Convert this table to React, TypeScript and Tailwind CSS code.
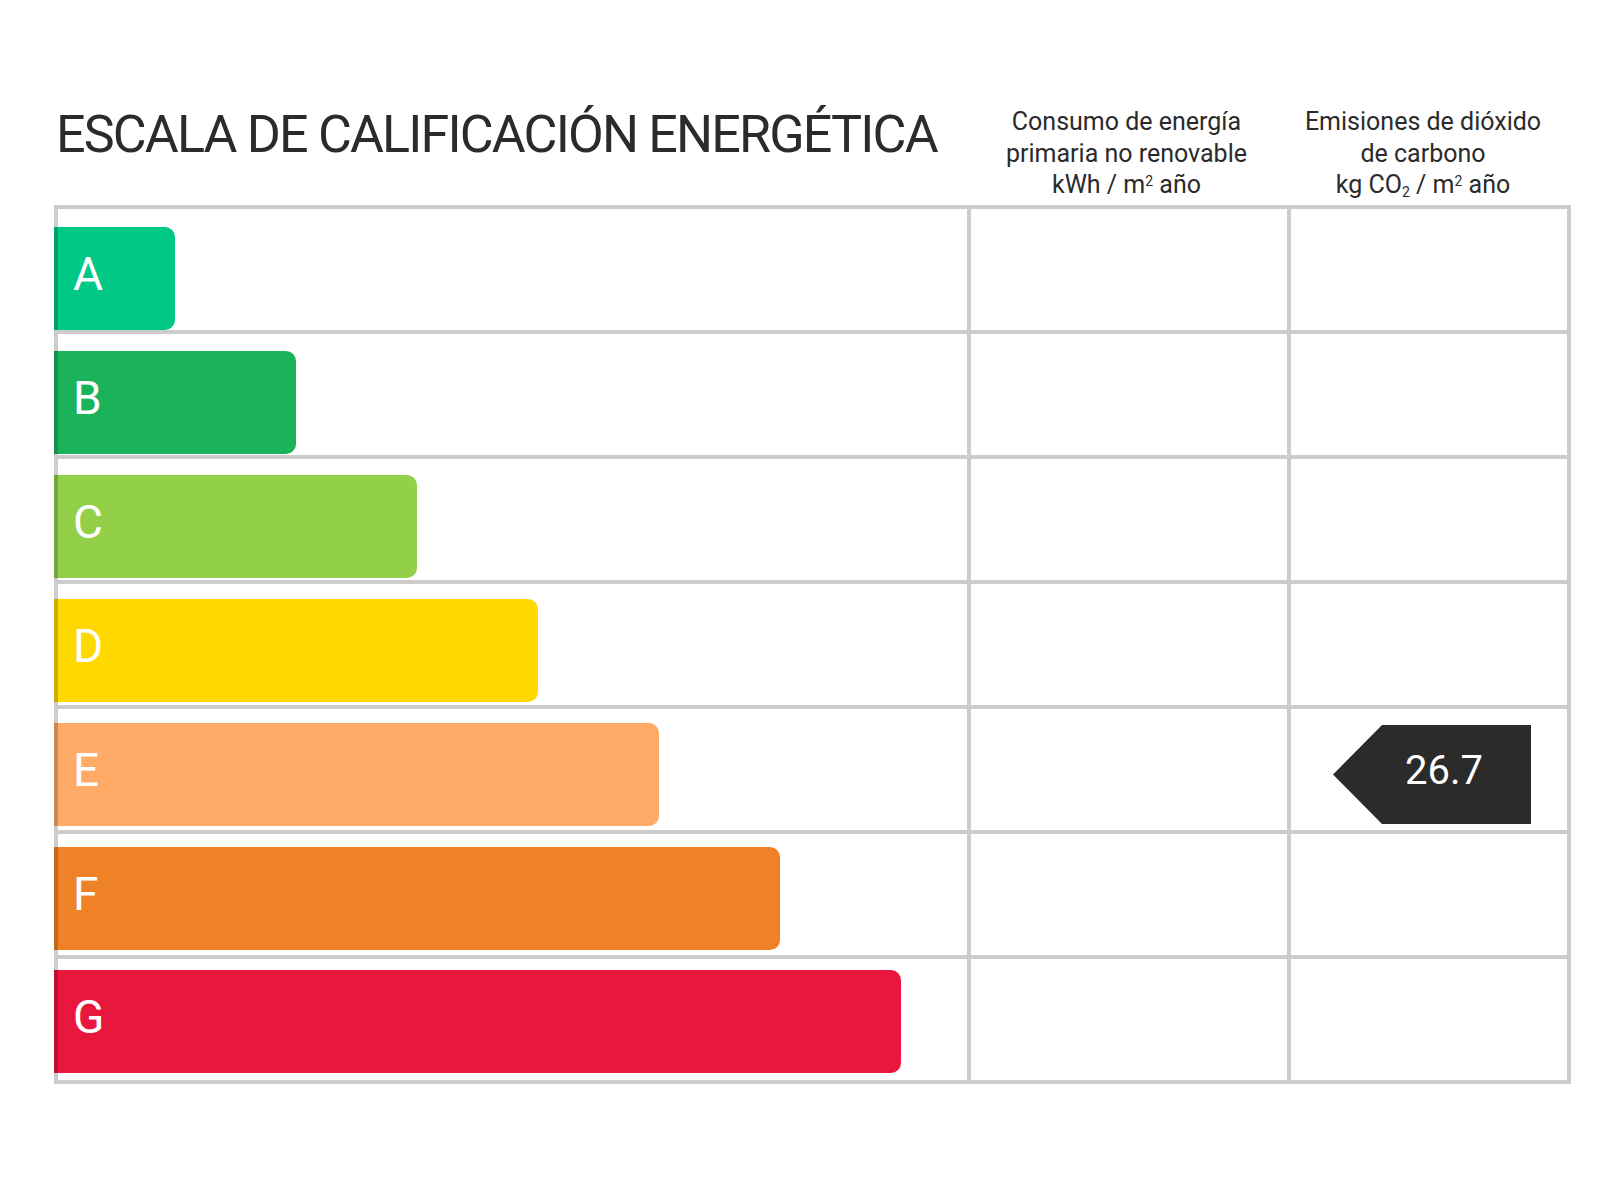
const font = { fontFamily: "Roboto, 'Liberation Sans', sans-serif" };

const bars = [
  { letter: "A", width: "w-[121px]", top: "mt-[18px]", color: "bg-[#00c985] border-[#00a16a]" },
  { letter: "B", width: "w-[242px]", top: "mt-[17px]", color: "bg-[#1bb35a] border-[#168f48]" },
  { letter: "C", width: "w-[363px]", top: "mt-[16px]", color: "bg-[#92d04a] border-[#75a63b]" },
  { letter: "D", width: "w-[484px]", top: "mt-[15px]", color: "bg-[#ffd800] border-[#ccad00]" },
  { letter: "E", width: "w-[605px]", top: "mt-[14px]", color: "bg-[#ffaa66] border-[#cc8852]" },
  { letter: "F", width: "w-[726px]", top: "mt-[13px]", color: "bg-[#ef8226] border-[#bf681e]" },
  { letter: "G", width: "w-[847px]", top: "mt-[11px]", color: "bg-[#e9173d] border-[#ba1231]" },
];

const Badge = ({ value }: { value: string }) => (
  <div className="ml-[42px] mt-[16px] flex h-[99px]">
    <svg width="49" height="99" viewBox="0 0 49 99" className="block">
      <polygon points="49,0 49,99 0,49.5" fill="#2b2b2b" />
    </svg>
    <div className="h-[99px] w-[149px] bg-[#2b2b2b] pl-[23px] pt-[26px] text-[40px] leading-none text-white">
      {value}
    </div>
  </div>
);

export default function App() {
  return (
    <div className="h-[1200px] w-[1600px] bg-white pl-[54px] pt-[106px] text-[#2b2b2b]" style={font}>
      {/* Header */}
      <div className="flex h-[99px] w-[1517px]">
        <h1 className="mt-[3px] w-[917px] pl-[2px] text-[52px] leading-none tracking-[-0.035em]">
          ESCALA DE CALIFICACIÓN ENERGÉTICA
        </h1>
        <div className="w-[320px] pr-[9px] text-center text-[25px] leading-[31.5px]">
          Consumo de energía
          <br />
          primaria no renovable
          <br />
          kWh / m<sup className="text-[14px]">2</sup> año
        </div>
        <div className="flex-1 pr-[16px] text-center text-[25px] leading-[31.5px]">
          Emisiones de dióxido
          <br />
          de carbono
          <br />
          kg CO<sub className="text-[14px]">2</sub> / m<sup className="text-[14px]">2</sup> año
        </div>
      </div>

      {/* Scale table */}
      <div className="w-[1517px] border-t-4 border-r-4 border-b-4 border-[#cccccc]">
        {bars.map((b, i) => (
          <div
            key={b.letter}
            className={
              i < bars.length - 1
                ? "flex h-[125px] border-b-4 border-[#cccccc]"
                : "flex h-[121px]"
            }
          >
            <div className="w-[917px] border-r-4 border-l-4 border-[#cccccc]">
              <div
                className={`${b.width} ${b.top} ${b.color} -ml-1 h-[103px] rounded-r-[10px] border-l-4 pl-[15px] pt-[24px] text-[46px] leading-none text-white`}
              >
                {b.letter}
              </div>
            </div>
            <div className="w-[320px] border-r-4 border-[#cccccc]" />
            <div className="flex-1">{b.letter === "E" && <Badge value="26.7" />}</div>
          </div>
        ))}
      </div>
    </div>
  );
}
